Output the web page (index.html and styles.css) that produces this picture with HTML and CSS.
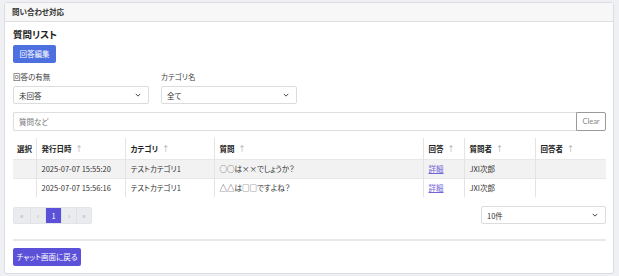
FILE: index.html
```html
<!DOCTYPE html>
<html lang="ja">
<head>
<meta charset="utf-8">
<title>問い合わせ対応</title>
<link rel="stylesheet" href="styles.css">
</head>
<body>
<div class="card">
  <div class="card-header">問い合わせ対応</div>
  <div class="card-body">
    <h2 class="title">質問リスト</h2>
    <button class="btn btn-blue">回答編集</button>
    <div class="filters">
      <div class="field">
        <label class="label">回答の有無</label>
        <div class="select"><span>未回答</span><svg class="chev" viewBox="0 0 8 5" width="6" height="4"><path d="M1 1l3 3 3-3" fill="none" stroke="#333" stroke-width="1.2"/></svg></div>
      </div>
      <div class="field">
        <label class="label">カテゴリ名</label>
        <div class="select"><span>全て</span><svg class="chev" viewBox="0 0 8 5" width="6" height="4"><path d="M1 1l3 3 3-3" fill="none" stroke="#333" stroke-width="1.2"/></svg></div>
      </div>
    </div>
    <div class="search">
      <div class="search-input">質問など</div>
      <button class="clear">Clear</button>
    </div>
    <table class="tbl">
      <colgroup>
        <col style="width:23px"><col style="width:89px"><col style="width:89px"><col style="width:209px"><col style="width:41px"><col style="width:71px"><col style="width:71px">
      </colgroup>
      <thead>
        <tr>
          <th class="first">選択</th>
          <th>発行日時 <span class="arr">↑</span></th>
          <th>カテゴリ <span class="arr">↑</span></th>
          <th>質問 <span class="arr">↑</span></th>
          <th>回答 <span class="arr">↑</span></th>
          <th>質問者 <span class="arr">↑</span></th>
          <th>回答者 <span class="arr">↑</span></th>
        </tr>
      </thead>
      <tbody>
        <tr class="odd">
          <td class="first"></td>
          <td>2025-07-07 15:55:20</td>
          <td>テストカテゴリ1</td>
          <td>○○は××でしょうか？</td>
          <td><a href="#" class="link">詳細</a></td>
          <td>JXI次郎</td>
          <td></td>
        </tr>
        <tr>
          <td class="first"></td>
          <td>2025-07-07 15:56:16</td>
          <td>テストカテゴリ1</td>
          <td>△△は□□ですよね？</td>
          <td><a href="#" class="link">詳細</a></td>
          <td>JXI次郎</td>
          <td></td>
        </tr>
      </tbody>
    </table>
    <div class="pager-row">
      <div class="pager">
        <span class="pg">«</span><span class="pg">‹</span><span class="pg active">1</span><span class="pg">›</span><span class="pg">»</span>
      </div>
      <div class="select select-per"><span>10件</span><svg class="chev" viewBox="0 0 8 5" width="6" height="4"><path d="M1 1l3 3 3-3" fill="none" stroke="#333" stroke-width="1.2"/></svg></div>
    </div>
    <hr class="divider">
    <button class="btn btn-indigo">チャット画面に戻る</button>
  </div>
</div>
</body>
</html>
```

FILE: styles.css
```css
* { box-sizing: border-box; }
html, body { margin: 0; padding: 0; }
body {
  background: #eff0f4;
  font-family: "Noto Sans CJK JP", "Noto Sans", sans-serif;
  font-feature-settings: "palt";
  font-size: 7.5px;
  color: #333;
  width: 619px;
  height: 276px;
  overflow: hidden;
}
.card {
  margin: 2px 0 0 4px;
  width: 610px;
  height: 272px;
  background: #fff;
  border: 1px solid #dcdde1;
  border-radius: 3px;
}
.card-header {
  height: 19px;
  line-height: 18px;
  padding-left: 7px;
  background: #f7f7f7;
  border-bottom: 1px solid #e0e0e0;
  font-weight: bold;
  font-size: 7.5px;
  color: #333;
}
.card-body {
  padding: 0 7px 0 8px;
}
.title {
  margin: 6px 0 0 0;
  height: 12px;
  line-height: 12px;
  font-size: 9.5px;
  font-weight: bold;
  color: #222;
}
.btn {
  display: block;
  border: none;
  border-radius: 2px;
  height: 18px;
  padding: 0 6px;
  color: #fff;
  font-family: inherit;
  font-feature-settings: "palt";
  font-size: 7.5px;
  line-height: 18px;
}
.btn-blue {
  margin-top: 5px;
  background: #4d70e1;
  width: 43px;
  padding: 0;
}
.btn-indigo {
  margin-top: 7px;
  background: #5b51d8;
  width: 68px;
  padding: 0;
}
.filters {
  display: flex;
  gap: 12px;
  margin-top: 8px;
}
.field { width: 136px; }
.label {
  display: block;
  height: 11px;
  line-height: 11px;
  color: #444;
}
.select {
  margin-top: 4px;
  height: 18px;
  border: 1px solid #dcdcdc;
  border-radius: 2px;
  display: flex;
  align-items: center;
  justify-content: space-between;
  padding: 0 7px 0 5px;
  color: #333;
}
.chev { display: block; }
.search {
  display: flex;
  margin-top: 8px;
  height: 19px;
}
.search-input {
  flex: 1;
  border: 1px solid #dedede;
  border-right: none;
  border-radius: 2px 0 0 2px;
  line-height: 17px;
  padding-left: 5px;
  color: #777;
}
.clear {
  width: 30px;
  height: 19px;
  border: 1px solid #9a9a9a;
  border-radius: 0 2px 2px 0;
  background: #fff;
  color: #888;
  font-family: "Lato", "Liberation Sans", sans-serif;
  font-size: 7.5px;
  padding: 0;
}
.tbl {
  margin-top: 7px;
  width: 593px;
  table-layout: fixed;
  border-collapse: collapse;
}
.tbl th, .tbl td {
  text-align: left;
  padding: 0 5px;
  border-left: 1px solid #e4e4e4;
  white-space: nowrap;
  overflow: hidden;
}
.tbl th.first, .tbl td.first { border-left: none; padding-left: 4px; }
.tbl th {
  height: 21px;
  font-weight: bold;
  color: #222;
}
.tbl td {
  height: 19px;
  color: #333;
  border-top: 1px solid #e8e8e8;
}
.tbl tr.odd td { background: #f2f2f2; }
.arr { color: #aaa; font-weight: normal; margin-left: 2px; }
.link { color: #7064d8; text-decoration: underline; }
.pager-row {
  margin-top: 9px;
  display: flex;
  justify-content: space-between;
  align-items: flex-start;
}
.pager {
  display: flex;
  margin-top: 1px;
  height: 17px;
  border-radius: 2px;
  overflow: hidden;
  background: #e9ebee;
  border: 1px solid #e2e4e8;
}
.pg {
  width: 15px;
  text-align: center;
  line-height: 15px;
  color: #aaa;
  font-size: 7px;
  border-left: 1px solid #dfe1e5;
}
.pg:first-child { border-left: none; width: 16px; }
.pg.active {
  background: #5b51d8;
  color: #fff;
  width: 16px;
  font-size: 7.5px;
}
.select-per {
  margin-top: 0;
  width: 125px;
}
.divider {
  margin: 15px 0 0 0;
  border: none;
  height: 2px;
  background: #e8e9ec;
}
```
